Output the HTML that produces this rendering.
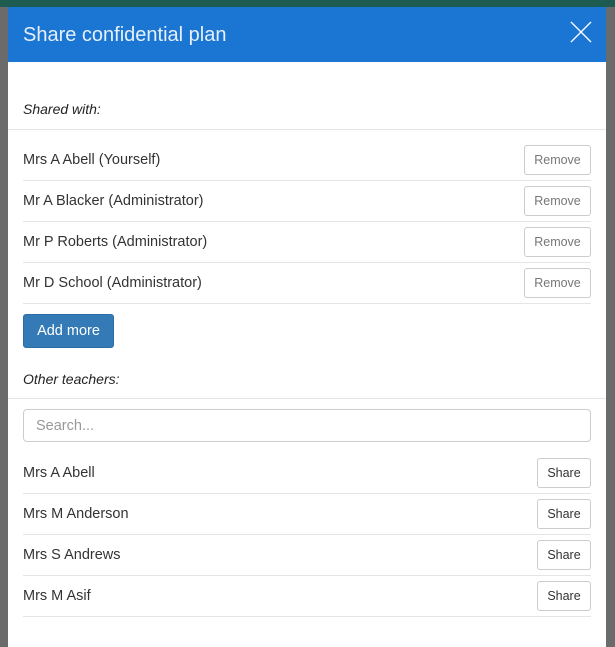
<!DOCTYPE html><html><head><style>
body{margin:0;width:615px;height:621px;overflow:hidden;background:#6b6b6b;font-family:"Liberation Sans",sans-serif;position:relative}
.top{position:absolute;left:0;top:0;width:615px;height:7px;background:#1e5b50}
.m{position:absolute;left:8px;top:7px;width:598px;height:640px;background:#fff}
.h{height:55px;background:#1a76d2;color:#e6f0fb;font-size:20px;line-height:56px;padding-left:15px;position:relative}
.x{position:absolute;right:14px;top:14px}
.lbl{position:absolute;left:15px;font-style:italic;font-size:14px;color:#222}
.ln{position:absolute;left:0;width:598px;height:1px;background:#e5e5e5}
.row{position:absolute;left:15px;width:568px;height:41px;border-bottom:1px solid #e5e5e5;font-size:14.5px;color:#333;line-height:43px}
.b{position:absolute;right:0;top:6px;height:28px;border:1px solid #ccc;border-radius:3px;background:#fff;font-size:12.5px;line-height:28px;text-align:center}
.rm{width:65px;color:#777}.sh{width:52px;color:#333}
.add{position:absolute;left:15px;top:307px;width:89px;height:32px;background:#337ab7;border:1px solid #2e6da4;border-radius:3px;color:#fff;font-size:14.5px;line-height:33px;text-align:center}
.s{position:absolute;left:15px;top:402px;width:568px;height:33px;box-sizing:border-box;border:1px solid #ccc;border-radius:4px;padding-left:12px;color:#999;font-size:14.5px;line-height:33px}
</style></head><body>
<div class="top"></div>
<div class="m">
<div class="h">Share confidential plan<svg class="x" width="22" height="22"><path d="M1 1L21 21M21 1L1 21" stroke="#fff" stroke-width="1.3"/></svg></div>
<div class="lbl" style="top:94px">Shared with:</div>
<div class="ln" style="top:122px"></div>
<div class="row" style="top:132px">Mrs A Abell (Yourself)<div class="b rm">Remove</div></div>
<div class="row" style="top:173px">Mr A Blacker (Administrator)<div class="b rm">Remove</div></div>
<div class="row" style="top:214px">Mr P Roberts (Administrator)<div class="b rm">Remove</div></div>
<div class="row" style="top:255px">Mr D School (Administrator)<div class="b rm">Remove</div></div>
<div class="add">Add more</div>
<div class="lbl" style="top:364px">Other teachers:</div>
<div class="ln" style="top:391px"></div>
<div class="s">Search...</div>
<div class="row" style="top:445px">Mrs A Abell<div class="b sh">Share</div></div>
<div class="row" style="top:486px">Mrs M Anderson<div class="b sh">Share</div></div>
<div class="row" style="top:527px">Mrs S Andrews<div class="b sh">Share</div></div>
<div class="row" style="top:568px">Mrs M Asif<div class="b sh">Share</div></div>
</div>
</body></html>
